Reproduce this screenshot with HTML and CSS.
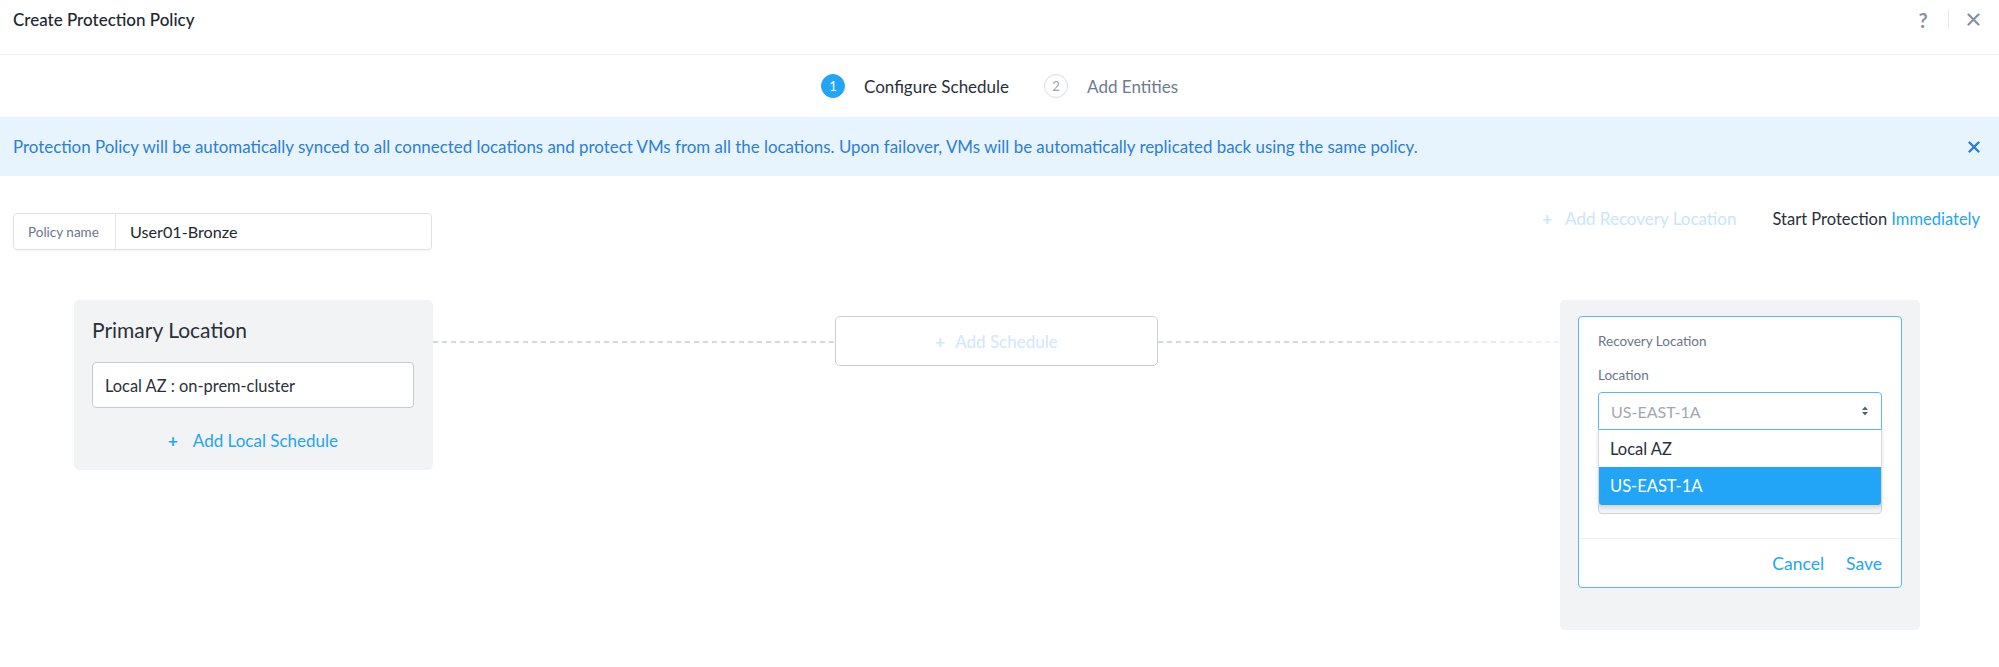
FILE: index.html
```html
<!DOCTYPE html>
<html>
<head>
<meta charset="utf-8">
<link rel="stylesheet" href="styles.css">
</head>
<body>
<div class="header">
  <div class="title">Create Protection Policy</div>
  <div class="header-actions">
    <span class="help">?</span>
    <span class="vdiv"></span>
    <svg class="close" width="13" height="13" viewBox="0 0 13 13"><path d="M1.5 1.5 L11.5 11.5 M11.5 1.5 L1.5 11.5" stroke="#8592a6" stroke-width="2.2" stroke-linecap="round"/></svg>
  </div>
</div>

<div class="stepper">
  <div class="step active"><span class="num">1</span><span class="label">Configure Schedule</span></div>
  <div class="step"><span class="num">2</span><span class="label">Add Entities</span></div>
</div>

<div class="banner">
  <div class="banner-text">Protection Policy will be automatically synced to all connected locations and protect VMs from all the locations. Upon failover, VMs will be automatically replicated back using the same policy.</div>
  <svg class="banner-close" width="12" height="12" viewBox="0 0 12 12"><path d="M1.5 1.5 L10.5 10.5 M10.5 1.5 L1.5 10.5" stroke="#2b7fd4" stroke-width="2.4" stroke-linecap="round"/></svg>
</div>

<div class="toolbar">
  <div class="policy-field">
    <span class="policy-label">Policy name</span>
    <span class="policy-value">User01-Bronze</span>
  </div>
  <div class="toolbar-right">
    <span class="add-recovery"><span class="plus">+</span>Add Recovery Location</span>
    <span class="start">Start Protection <span class="link">Immediately</span></span>
  </div>
</div>

<div class="canvas">
  <div class="loc-card primary">
    <div class="loc-title">Primary Location</div>
    <div class="loc-input">Local AZ : on-prem-cluster</div>
    <div class="add-local"><span class="plus">+</span>Add Local Schedule</div>
  </div>
  <div class="dash"></div>
  <div class="schedule-box"><span class="plus">+</span>Add Schedule</div>
  <div class="dash fade"></div>
  <div class="loc-card recovery">
    <div class="rec-form">
      <div class="rec-body">
        <div class="rec-heading">Recovery Location</div>
        <div class="rec-label">Location</div>
        <div class="select-wrap">
          <div class="select">
            <span>US-EAST-1A</span>
            <svg width="8" height="12" viewBox="0 0 8 12"><path d="M4 1.5 L7 5 H1 Z M4 10.5 L7 7 H1 Z" fill="#5a6372"/></svg>
          </div>
          <div class="menu">
            <div class="opt">Local AZ</div>
            <div class="opt selected">US-EAST-1A</div>
          </div>
        </div>
        <div class="hidden-field"></div>
      </div>
      <div class="rec-footer">
        <span class="btn">Cancel</span>
        <span class="btn">Save</span>
      </div>
    </div>
  </div>
</div>
</body>
</html>
```
FILE: styles.css
```css
* { box-sizing: border-box; }
body {
  margin: 0;
  font-family: Lato, "Open Sans", sans-serif;
  color: #262c36;
  background: #fff;
}
.header {
  height: 55px;
  border-bottom: 1px solid #eff1f3;
  display: flex;
  align-items: center;
  justify-content: space-between;
  padding: 0 19px 0 13px;
}
.title {
  font-size: 17px;
  font-weight: 500;
  color: #22272f;
  margin-top: -15px;
}
.header-actions {
  display: flex;
  align-items: center;
  margin-top: -15px;
}
.help {
  font-size: 20px;
  font-weight: 700;
  color: #8592a6;
  width: 14px;
  text-align: center;
}
.vdiv {
  width: 1px;
  height: 19px;
  background: #e4e7eb;
  margin: 0 18px 0 18px;
}
.close { display: block; }

.stepper {
  height: 62px;
  display: flex;
  align-items: center;
  justify-content: center;
  gap: 35px;
}
.step {
  display: flex;
  align-items: center;
  gap: 19px;
}
.num {
  width: 24px;
  height: 24px;
  border-radius: 50%;
  display: flex;
  align-items: center;
  justify-content: center;
  font-size: 13px;
  border: 1.5px solid #d8dde4;
  color: #9aa4b2;
}
.step.active .num {
  background: #22a5f7;
  border-color: #22a5f7;
  color: #fff;
}
.label {
  font-size: 17px;
  color: #6e7b8f;
}
.step.active .label { color: #2a303a; }

.banner {
  height: 59px;
  background: #e8f4fd;
  display: flex;
  align-items: center;
  justify-content: space-between;
  padding: 0 19px 0 13px;
}
.banner-text {
  font-size: 16.9px;
  color: #2b7fd4;
}
.banner-close { display: block; }

.toolbar {
  margin-top: 37px;
  height: 37px;
  display: flex;
  align-items: center;
  justify-content: space-between;
  padding: 0 19px 0 13px;
}
.policy-field {
  width: 419px;
  height: 37px;
  border: 1px solid #dde1e6;
  border-radius: 4px;
  display: flex;
  align-items: center;
  box-shadow: 0 1px 1px rgba(0,0,0,0.04);
}
.policy-label {
  width: 102px;
  height: 100%;
  border-right: 1px solid #e3e6ea;
  display: flex;
  align-items: center;
  padding-left: 14px;
  font-size: 13.5px;
  color: #6c7686;
}
.policy-value {
  padding-left: 14px;
  font-size: 16.2px;
  color: #22272f;
}
.toolbar-right {
  display: flex;
  align-items: center;
  gap: 36px;
  margin-top: -26px;
}
.plus {
  font-weight: 700;
  margin-right: 13px;
  font-size: 17px;
}
.add-recovery {
  font-size: 17px;
  color: #c9e5fb;
}
.start {
  font-size: 16.5px;
  color: #2a303a;
}
.link { color: #22a5f7; }

.canvas {
  margin-top: 50px;
  display: flex;
  align-items: flex-start;
  padding: 0 79px 0 74px;
}
.loc-card {
  width: 359px;
  background: #f2f3f5;
  border-radius: 5px;
}
.primary {
  padding: 16px 19px 18px 18px;
}
.loc-title {
  font-size: 21px;
  color: #2a303a;
  line-height: 28px;
}
.loc-input {
  margin-top: 18px;
  height: 46px;
  background: #fff;
  border: 1px solid #c6cbd3;
  border-radius: 4px;
  display: flex;
  align-items: center;
  padding-left: 12px;
  font-size: 16.4px;
  color: #2a303a;
}
.add-local {
  margin-top: 22px;
  text-align: center;
  font-size: 17px;
  color: #22a5f7;
  line-height: 22px;
}
.add-local .plus { margin-right: 15px; }
.dash {
  flex: 1;
  height: 2px;
  margin-top: 41px;
  background-image: linear-gradient(to right, #d3d8df 60%, transparent 60%);
  background-size: 9px 2px;
}
.dash.fade {
  -webkit-mask-image: linear-gradient(to right, #000 40%, rgba(0,0,0,0.35));
  mask-image: linear-gradient(to right, #000 40%, rgba(0,0,0,0.35));
}
.schedule-box {
  width: 323px;
  height: 50px;
  margin-top: 16px;
  border: 1px solid #c9ced6;
  border-radius: 5px;
  display: flex;
  align-items: center;
  justify-content: center;
  font-size: 17px;
  color: #cfe7fb;
}
.schedule-box .plus { margin-right: 10px; }
.recovery {
  width: 360px;
  padding: 16px 18px 42px 18px;
}
.rec-form {
  background: #fff;
  border: 1.5px solid #5cb6f2;
  border-radius: 4px;
}
.rec-body {
  padding: 14px 19px 24px 19px;
}
.rec-heading {
  font-size: 13.5px;
  color: #6b7587;
  line-height: 20px;
}
.rec-label {
  margin-top: 14px;
  font-size: 13.5px;
  color: #6b7587;
  line-height: 20px;
}
.select-wrap {
  position: relative;
  margin-top: 7px;
}
.select {
  height: 38px;
  border: 1px solid #5cb6f2;
  border-radius: 4px 4px 0 0;
  display: flex;
  align-items: center;
  justify-content: space-between;
  padding: 0 12px;
  font-size: 16px;
  color: #a2a8b1;
}
.menu {
  position: absolute;
  left: 0;
  right: 0;
  top: 37px;
  background: #fff;
  border: 1px solid #d5d9df;
  border-top: 1px solid #5cb6f2;
  border-radius: 0 0 4px 4px;
  box-shadow: 0 2px 4px rgba(0,0,0,0.12);
  overflow: hidden;
  z-index: 2;
}
.opt {
  height: 37px;
  display: flex;
  align-items: center;
  padding-left: 11px;
  font-size: 16.5px;
  color: #2a303a;
}
.opt.selected {
  background: #22a5f7;
  color: #fff;
  height: 38px;
}
.hidden-field {
  margin-top: 47px;
  height: 37px;
  background: #f3f4f6;
  border: 1px solid #cfd3d9;
  border-radius: 4px;
}
.rec-footer {
  border-top: 1px solid #eef0f3;
  height: 49px;
  display: flex;
  align-items: center;
  justify-content: flex-end;
  gap: 22px;
  padding-right: 19px;
}
.btn {
  font-size: 17.5px;
  color: #22a5f7;
}
```
